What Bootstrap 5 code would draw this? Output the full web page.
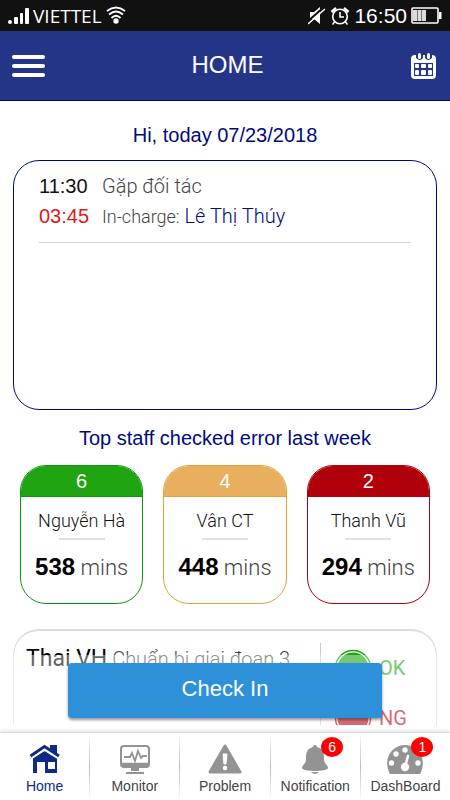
<!DOCTYPE html>
<html lang="en">
<head>
<meta charset="utf-8">
<meta name="viewport" content="width=device-width, initial-scale=1">
<title>Home</title>
<link href="https://cdn.jsdelivr.net/npm/bootstrap@5.3.0/dist/css/bootstrap.min.css" rel="stylesheet">
<style>
:root { --navy: #000a80; --hel: "Liberation Sans", Arial, sans-serif; --rob: Roboto, sans-serif; }
body { font-family: var(--hel); color: #111; line-height: 1.2; }
svg { display: block; flex: none; }
.statusbar { background: #111; height: 31px; padding: 0 8px; font-size: 21px; }
.carrier { font-family: "Open Sans", sans-serif; font-size: 19px; line-height: 24px; }
.topbar { background: #243588; height: 70px; padding: 0 12px; border-bottom: 1px solid #000a70; }
.topbar h1 { font-size: 24px; line-height: 34px; padding-bottom: 2px; }
.content { padding: 22px 13px 7px; }
.heading { font-size: 20px; line-height: 24px; color: var(--navy); }
.rob { font-family: var(--rob); font-weight: 300; }
.agenda { border: 1px solid var(--navy); border-radius: 26px; min-height: 250px; padding: 10px 25px; margin: 13px 0 16px; }
.agenda-list { border-bottom: 1px solid #d3d6d3; padding-bottom: 10px; font-size: 20px; line-height: 30px; }
.time { width: 63px; flex: none; }
.late { color: #e0161c; }
.note { color: #444; }
.note-label { font-size: 18px; }
.person { color: var(--navy); }
.staff-list { gap: 20px; margin: 15px 7px 25px; }
.staff-card { flex: 1 1 0; border: 1px solid var(--tone); border-radius: 26px; min-height: 139px; overflow: hidden; }
.staff-count { background: var(--fill); border-bottom: 1px solid var(--tone); color: #fff; font-size: 20px; line-height: 30px; }
.tone-green { --tone: #0f960f; --fill: #20a411; }
.tone-amber { --tone: #e6a234; --fill: #e8af5e; }
.tone-red { --tone: #b0000c; --fill: #b0000b; }
.staff-name { font-size: 18px; line-height: 24px; padding-top: 12px; }
.staff-rule { width: 46px; height: 2px; background: #e0e0e0; margin: 5px auto 12px; }
.staff-mins { font-size: 22px; line-height: 30px; color: #444; }
.staff-mins b { font-family: var(--hel); font-size: 24px; font-weight: 700; color: #000; }
.task { border: 1px solid #ddd; border-top-width: 2px; border-bottom: 0; border-radius: 26px 26px 0 0; height: 96px; overflow: hidden; padding: 12px 12px 0; }
.task-text { font-size: 20px; line-height: 32px; white-space: nowrap; color: #444; }
.task-owner { font-size: 23px; color: #000; font-weight: 400; }
.task-state { border-left: 1px solid #ccc; padding-left: 13px; width: 104px; font-size: 20px; font-weight: 400; }
.state-row { height: 50px; gap: 7px; }
.ok { color: #1ba511; }
.ng { color: #bd0714; }
.haze { left: 0; right: 0; top: 26px; bottom: 0; background: #ffffff66; }
.checkin { left: 55px; right: 55px; top: 34px; height: 55px; background: #2f90da; border: 0; border-radius: 4px; color: #fff; font-size: 22px; line-height: 26px; padding-bottom: 4px; box-shadow: 0 2px 3px #0006; }
.tabbar { min-height: 68px; border-top: 1px solid #ddd; box-shadow: 0 -1px 4px #0002; background: #fff; }
.tab { flex: 1 1 0; min-width: 0; padding-top: 10px; color: #444; font-size: 14px; line-height: 16px; }
.tab + .tab { border-left: 1px solid; border-image: linear-gradient(#fff, #bbb 50%, #fff) 1; }
.tab svg { margin-bottom: 3px; color: #939393; }
.tab.current, .tab.current svg { color: #0d2a86; }
.count { top: 4px; left: 50%; margin-left: 6px; width: 22px; height: 20px; border-radius: 50%; background: #f00; color: #fff; line-height: 20px; }
</style>
<script src="https://cdn.jsdelivr.net/npm/bootstrap@5.3.0/dist/js/bootstrap.bundle.min.js"></script>
</head>
<body class="bg-white d-flex flex-column min-vh-100">
<div class="statusbar d-flex align-items-center justify-content-between text-white">
  <div class="d-flex align-items-center gap-1">
    <svg width="21" height="18" fill="#fff"><circle cx="2" cy="15" r="2"/><rect x="6" y="10" width="4" height="7" rx="1"/><rect x="12" y="6" width="3" height="11" rx="1"/><rect x="17" y="1" width="4" height="16" rx="1"/></svg>
    <span class="carrier">VIETTEL</span>
    <svg width="20" height="19" fill="none" stroke="#fff" stroke-width="1.8"><path d="M1 5Q10-2 19 5M3 8.500Q10 2.500 17 8.500M5.500 12Q10 7.500 14.500 12"/><circle cx="10" cy="15" r="2.700" fill="#fff" stroke="none"/></svg>
  </div>
  <div class="d-flex align-items-center gap-1">
    <svg width="18" height="18"><path d="M2 5h4l6-5v17l-6-5H2z" fill="#fff"/><path d="M-1 15L16 0" stroke="#111" stroke-width="2"/><path d="M0 17L17 2" stroke="#fff" stroke-width="1.500"/></svg>
    <svg width="20" height="18" fill="none" stroke="#fff" stroke-width="1.600"><circle cx="10" cy="9.500" r="7.300"/><path d="M10 5v5h4M4.500 15l-2 2.500M15.500 15l2 2.500"/><path d="M1.500 5L6 1M14 1l4.500 4" stroke-width="2.400"/></svg>
    <span>16:50</span>
    <svg width="31" height="18"><rect x="1" y="1" width="26" height="15" rx="1" fill="none" stroke="#fff" stroke-width="1.600"/><path d="M28 5h2.500v7H28z" fill="#fff"/><path d="M2 3h4v11H2zM6.500 3h4v11h-4zM11 3h4v11h-4z" fill="#ddd"/></svg>
  </div>
</div>
<header class="topbar d-flex align-items-center justify-content-between text-white">
  <button class="btn p-0 border-0" type="button" aria-label="Menu"><svg width="33" height="24" stroke="#fff" stroke-width="4" stroke-linecap="round"><path d="M2 3h29M2 12h29M2 21h29"/></svg></button>
  <h1 class="m-0 fw-normal">HOME</h1>
  <button class="btn p-0 border-0" type="button" aria-label="Calendar"><svg width="28" height="28"><rect x="1" y="3" width="25" height="24" rx="4" fill="#fff"/><path d="M6 0h7v6q-3 4-7 0zM15 0h7v6q-4 4-7 0zM4 11h19v13H4z" fill="#243588"/><g fill="#fff"><rect x="8" y="1" width="3" height="6" rx="1.500"/><rect x="17" y="1" width="3" height="6" rx="1.500"/><rect x="5" y="12" width="4" height="4" rx="1"/><rect x="11" y="12" width="5" height="4" rx="1"/><rect x="18" y="12" width="4" height="4" rx="1"/><rect x="5" y="18" width="4" height="5" rx="1"/><rect x="11" y="18" width="5" height="5" rx="1"/><rect x="18" y="18" width="4" height="5" rx="1"/></g></svg></button>
</header>
<main class="content flex-grow-1">
  <h2 class="heading fw-normal text-center m-0">Hi, today 07/23/2018</h2>
  <section class="agenda">
    <div class="agenda-list">
      <div class="d-flex"><span class="time">11:30</span><span class="rob note">Gặp đối tác</span></div>
      <div class="d-flex"><span class="time late">03:45</span><span class="rob note"><span class="note-label">In-charge:</span> <a href="#" class="person text-decoration-none">Lê Thị Thúy</a></span></div>
    </div>
  </section>
  <h2 class="heading fw-normal text-center m-0">Top staff checked error last week</h2>
  <section class="staff-list d-flex text-center">
    <article class="staff-card tone-green"><div class="staff-count">6</div><div class="rob staff-name">Nguyễn Hà</div><div class="staff-rule"></div><div class="rob staff-mins"><b>538</b> mins</div></article>
    <article class="staff-card tone-amber"><div class="staff-count">4</div><div class="rob staff-name">Vân CT</div><div class="staff-rule"></div><div class="rob staff-mins"><b>448</b> mins</div></article>
    <article class="staff-card tone-red"><div class="staff-count">2</div><div class="rob staff-name">Thanh Vũ</div><div class="staff-rule"></div><div class="rob staff-mins"><b>294</b> mins</div></article>
  </section>
  <div class="position-relative">
    <section class="task d-flex justify-content-between">
      <div class="rob task-text"><span class="task-owner">Thai VH</span> Chuẩn bị giai đoạn 3</div>
      <div class="rob task-state">
        <div class="state-row ok d-flex align-items-center"><svg width="38" height="38"><circle cx="19" cy="19" r="17.500" fill="none" stroke="currentColor" stroke-width="1.500"/><circle cx="19" cy="19" r="15.500" fill="currentColor"/></svg><span>OK</span></div>
        <div class="state-row ng d-flex align-items-center"><svg width="38" height="38"><circle cx="19" cy="19" r="17.500" fill="none" stroke="currentColor" stroke-width="1.500"/><circle cx="19" cy="19" r="15.500" fill="currentColor"/></svg><span>NG</span></div>
      </div>
    </section>
    <div class="haze position-absolute"></div>
    <button class="checkin position-absolute" type="button">Check In</button>
  </div>
</main>
<nav class="tabbar d-flex text-center">
  <a href="#" class="tab current text-decoration-none d-flex flex-column align-items-center"><svg width="32" height="32" fill="currentColor"><path d="M16 7L4 15v15h4V19h8v11h12V14zM19 19h7v7h-7z" fill-rule="evenodd"/><path d="M1.500 13.500L15.500 4.500 30 13.500" fill="none" stroke="#fff" stroke-width="6"/><path d="M21 2h7v9l-7-5z"/><path d="M1.500 13L15.500 3.500 30 13" fill="none" stroke="currentColor" stroke-width="3"/></svg>Home</a>
  <a href="#" class="tab text-decoration-none d-flex flex-column align-items-center"><svg width="32" height="32" fill="none" stroke="currentColor" stroke-width="2"><rect x="2" y="3" width="28" height="21" rx="3"/><path d="M2 21.500h28" stroke-width="3.500"/><path d="M5 14h6l2-4 3 8 3-10 3 7 2-2h4" stroke-width="1.800"/><path d="M12 25h8v3h-8z" fill="currentColor" stroke="none"/><path d="M7 30h18"/></svg>Monitor</a>
  <a href="#" class="tab text-decoration-none d-flex flex-column align-items-center"><svg width="34" height="32"><path d="M17 3L32 29H2z" fill="currentColor" stroke="currentColor" stroke-width="3" stroke-linejoin="round"/><path d="M15 11h4l-1 10h-2z" fill="#fff" stroke="#fff"/><circle cx="17" cy="25" r="2.200" fill="#fff"/></svg>Problem</a>
  <a href="#" class="tab text-decoration-none d-flex flex-column align-items-center position-relative"><svg width="30" height="32" fill="currentColor"><path d="M15 2q2 0 2 2c7 2 7 7 7 12 0 5 4 6 4 9 0 4-26 4-26 0 0-3 4-4 4-9C6 11 6 6 13 4q0-2 2-2zM11 29h8q-4 4-8 0z"/></svg><span class="count position-absolute">6</span>Notification</a>
  <a href="#" class="tab text-decoration-none d-flex flex-column align-items-center position-relative"><svg width="38" height="32"><path d="M4 31C-4 16 6 2 19 2s23 14 15 29z" fill="currentColor"/><g fill="#fff"><circle cx="5.500" cy="20" r="2.700"/><circle cx="10" cy="11" r="2.700"/><circle cx="19" cy="7" r="2.700"/><circle cx="32" cy="20" r="2.700"/><circle cx="19" cy="24" r="4.200"/></g><path d="M19 24l3-11" stroke="#fff" stroke-width="2.500" stroke-linecap="round"/></svg><span class="count position-absolute">1</span>DashBoard</a>
</nav>
</body>
</html>
